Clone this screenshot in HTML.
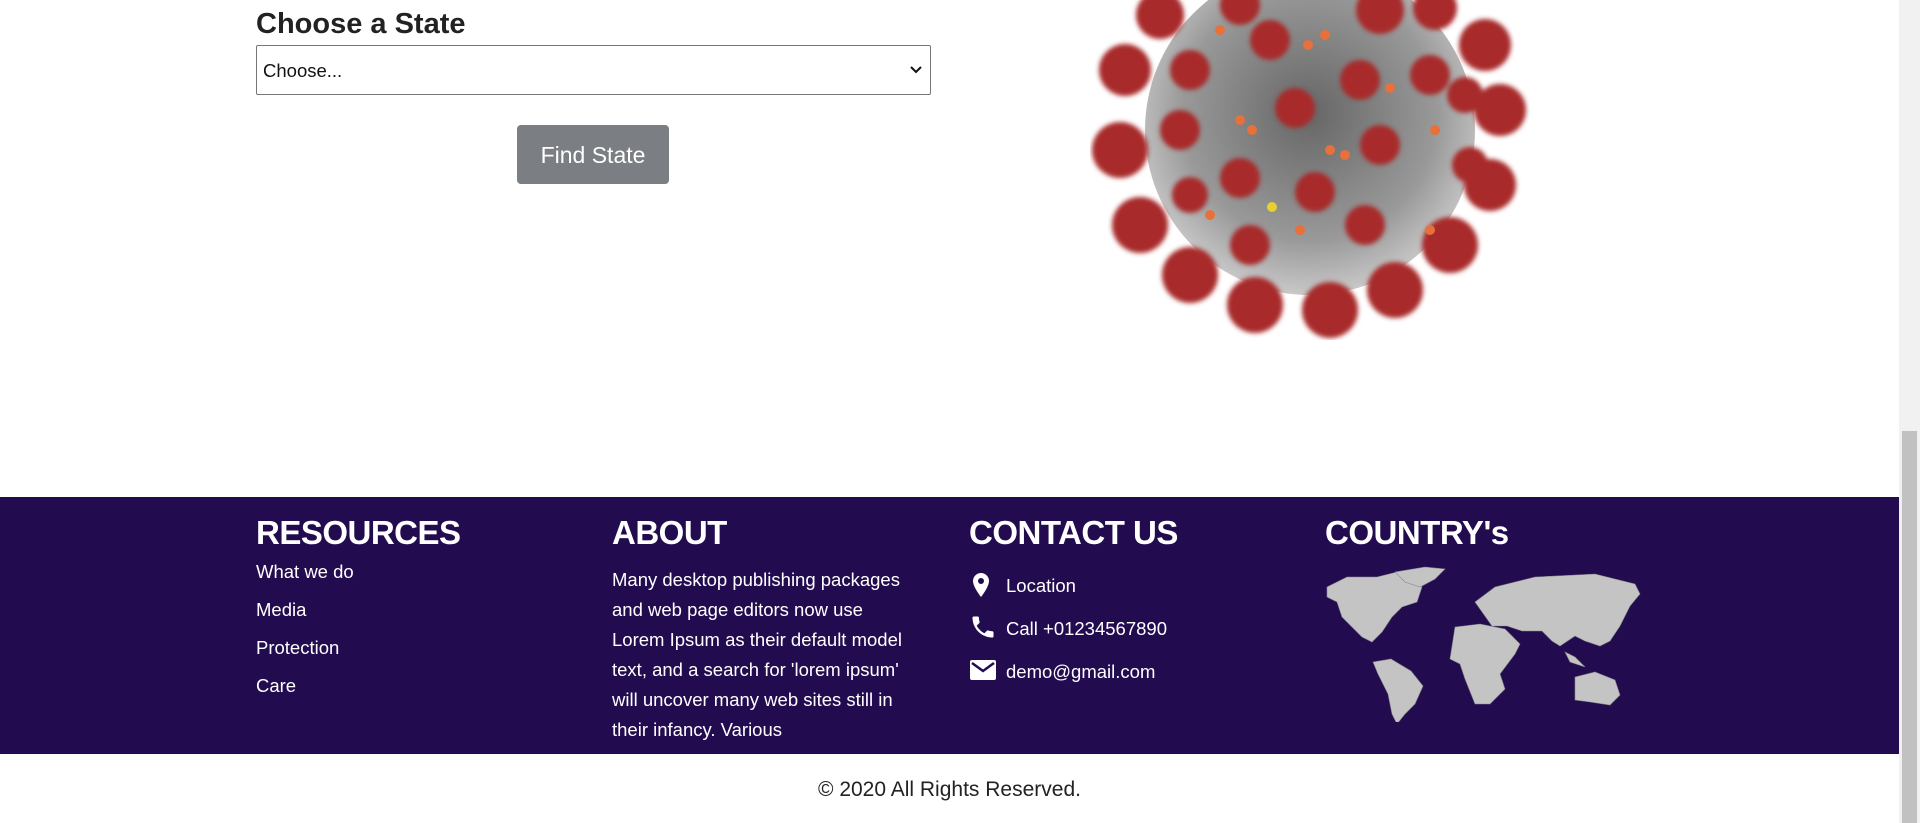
<!DOCTYPE html>
<html><head><meta charset="utf-8"><style>
*{box-sizing:border-box;margin:0;padding:0}
body{width:1920px;height:823px;overflow:hidden;background:#fff;font-family:"Liberation Sans",sans-serif;position:relative;color:#212529}
.abs{position:absolute}
.scroll{position:absolute;right:0;top:0;width:21px;height:823px;background:#f1f1f1}
.thumb{position:absolute;right:3px;top:431px;width:15px;height:392px;background:#c1c1c1}
footer{position:absolute;left:0;top:497px;width:1899px;height:257px;background:#220c4f;color:#fff}
footer h3{position:absolute;top:17px;font-size:33px;font-weight:bold;letter-spacing:-0.5px}
footer .t{position:absolute;font-size:18.5px;white-space:nowrap}
</style></head><body>
<div class="abs" style="left:256px;top:8px;font-size:29px;font-weight:bold;color:#222">Choose a State</div>
<div class="abs" style="left:256px;top:45px;width:675px;height:50px;border:1px solid #767676;border-radius:2px;font-size:18.5px;padding:14px 6px;color:#111">Choose...
<svg class="abs" style="right:8px;top:19px" width="12" height="9" viewBox="0 0 12 9"><path d="M1 2l5 5 5-5" stroke="#111" stroke-width="2" fill="none"/></svg></div>
<div class="abs" style="left:517px;top:125px;width:152px;height:59px;background:#7b7e82;border-radius:4px;color:#fff;font-size:23px;text-align:center;line-height:61px">Find State</div>

<svg class="abs" style="left:1090px;top:0" width="440" height="340" viewBox="0 0 440 340">
<defs><radialGradient id="g" cx="50%" cy="45%" r="55%"><stop offset="0" stop-color="#666"/><stop offset=".7" stop-color="#999"/><stop offset="1" stop-color="#c8c8c8"/></radialGradient>
<filter id="b"><feGaussianBlur stdDeviation="2.5"/></filter></defs>
<circle cx="220" cy="130" r="165" fill="url(#g)"/>
<g fill="#a82a2a" filter="url(#b)">
<circle cx="35" cy="70" r="26"/><circle cx="30" cy="150" r="28"/><circle cx="50" cy="225" r="28"/><circle cx="100" cy="275" r="28"/><circle cx="165" cy="305" r="28"/><circle cx="240" cy="310" r="28"/><circle cx="305" cy="290" r="28"/><circle cx="360" cy="245" r="28"/><circle cx="400" cy="185" r="26"/><circle cx="410" cy="110" r="26"/><circle cx="395" cy="45" r="26"/><circle cx="70" cy="15" r="24"/><circle cx="150" cy="5" r="20"/><circle cx="290" cy="10" r="24"/><circle cx="345" cy="8" r="22"/>
<circle cx="180" cy="40" r="20"/><circle cx="270" cy="80" r="20"/><circle cx="205" cy="108" r="20"/><circle cx="100" cy="70" r="20"/><circle cx="90" cy="130" r="20"/><circle cx="290" cy="145" r="20"/><circle cx="150" cy="178" r="20"/><circle cx="225" cy="192" r="20"/><circle cx="275" cy="225" r="20"/><circle cx="160" cy="245" r="20"/><circle cx="100" cy="195" r="18"/><circle cx="340" cy="75" r="20"/><circle cx="375" cy="95" r="18"/><circle cx="380" cy="165" r="18"/>
</g>
<g fill="#e8703a"><circle cx="130" cy="30" r="5"/><circle cx="218" cy="45" r="5"/><circle cx="235" cy="35" r="5"/><circle cx="150" cy="120" r="5"/><circle cx="162" cy="130" r="5"/><circle cx="300" cy="88" r="5"/><circle cx="240" cy="150" r="5"/><circle cx="255" cy="155" r="5"/><circle cx="120" cy="215" r="5"/><circle cx="210" cy="230" r="5"/><circle cx="340" cy="230" r="5"/><circle cx="345" cy="130" r="5"/></g>
<circle cx="182" cy="207" r="5" fill="#e8d030"/>
</svg>

<footer>
<h3 style="left:256px">RESOURCES</h3>
<div class="t" style="left:256px;top:64px">What we do</div>
<div class="t" style="left:256px;top:102px">Media</div>
<div class="t" style="left:256px;top:140px">Protection</div>
<div class="t" style="left:256px;top:178px">Care</div>
<h3 style="left:612px">ABOUT</h3>
<div class="t" style="left:612px;top:68px;line-height:30px;font-size:18.5px">Many desktop publishing packages<br>and web page editors now use<br>Lorem Ipsum as their default model<br>text, and a search for 'lorem ipsum'<br>will uncover many web sites still in<br>their infancy. Various</div>
<h3 style="left:969px">CONTACT US</h3>
<svg class="abs" style="left:971px;top:75px" width="20" height="26" viewBox="0 0 20 26"><path d="M10 1a8 8 0 0 0-8 8c0 6 8 16 8 16s8-10 8-16a8 8 0 0 0-8-8z" fill="#fff"/><circle cx="10" cy="9" r="3" fill="#220c4f"/></svg>
<div class="t" style="left:1006px;top:78px">Location</div>
<svg class="abs" style="left:969px;top:116px" width="28" height="28" viewBox="0 0 24 24"><path d="M6.6 10.8c1.4 2.8 3.8 5.1 6.6 6.6l2.2-2.2c.3-.3.7-.4 1-.2 1.1.4 2.3.6 3.6.6.6 0 1 .4 1 1V20c0 .6-.4 1-1 1C10.6 21 3 13.4 3 4c0-.6.4-1 1-1h3.5c.6 0 1 .4 1 1 0 1.3.2 2.5.6 3.6.1.3 0 .7-.2 1z" fill="#fff"/></svg>
<div class="t" style="left:1006px;top:121px">Call +01234567890</div>
<svg class="abs" style="left:970px;top:163px" width="26" height="20" viewBox="0 0 26 20"><rect width="26" height="20" rx="2" fill="#fff"/><path d="M2 3l11 8 11-8" stroke="#220c4f" stroke-width="2.5" fill="none"/></svg>
<div class="t" style="left:1006px;top:164px">demo@gmail.com</div>
<h3 style="left:1325px">COUNTRY's</h3>
<svg class="abs" style="left:1325px;top:65px" width="320" height="160" viewBox="0 0 320 160" fill="#c4c4c4" stroke="#888" stroke-width=".6">
<path d="M2 25l20-10 30 0 20-5 15 5 10 10-5 15-15 5-10 10-10 15-10 10-10-5-10-10-10-10-5-15-10-5z"/>
<path d="M70 10l30-5 20 2-10 10-15 8-15-5z"/>
<path d="M48 100l18-3 20 12 12 15-8 18-10 10-8 10-5-10-4-20-10-20z"/>
<path d="M150 40l20-15 40-10 60-3 40 10 5 10-10 12-10 20-10 15-10 5-15-5-10-5-15 10-8-5-10-10-20 0-15-5-15 0z"/>
<path d="M130 65l25-3 25 5 15 15-5 10-15 20 5 15-15 15-15 0-10-25-5-15-10-5z"/>
<path d="M250 115l20-5 20 8 5 15-10 10-20-3-15-2z"/>
<path d="M240 90l10 5 10 10-15-5z"/>
</svg>
</footer>
<div class="abs" style="left:0;top:778px;width:1899px;text-align:center;font-size:21px;color:#222">© 2020 All Rights Reserved.</div>
<div class="scroll"><div class="thumb"></div></div>
</body></html>
